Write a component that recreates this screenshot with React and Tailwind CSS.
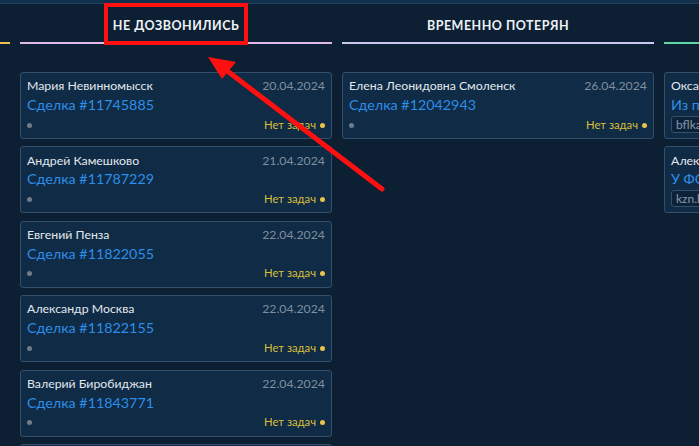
import React from "react";

const columns = [
  { id: "c1", title: "", line: "bg-[#e9c24d]", cards: [] },
  {
    id: "c2",
    title: "НЕ ДОЗВОНИЛИСЬ",
    line: "bg-[#e2b6ea]",
    cards: [
      { name: "Мария Невинномысск", date: "20.04.2024", deal: "Сделка #11745885" },
      { name: "Андрей Камешково", date: "21.04.2024", deal: "Сделка #11787229" },
      { name: "Евгений Пенза", date: "22.04.2024", deal: "Сделка #11822055" },
      { name: "Александр Москва", date: "22.04.2024", deal: "Сделка #11822155" },
      { name: "Валерий Биробиджан", date: "22.04.2024", deal: "Сделка #11843771" },
      { name: "", date: "", deal: "", empty: true },
    ],
  },
  {
    id: "c3",
    title: "ВРЕМЕННО ПОТЕРЯН",
    line: "bg-[#c9c8f0]",
    cards: [{ name: "Елена Леонидовна Смоленск", date: "26.04.2024", deal: "Сделка #12042943" }],
  },
  {
    id: "c4",
    title: "",
    line: "bg-[#5fd6a4]",
    cards: [
      { name: "Оксана", date: "", deal: "Из п", tag: "bflka" },
      { name: "Алекс", date: "", deal: "У ФС", tag: "kzn.b" },
    ],
  },
];

function Card({ c }) {
  if (c.empty) {
    return <div className="h-[67px] rounded-[3px] border border-[#344f6b] bg-[#0f2b45]" />;
  }
  return (
    <div className="h-[67px] rounded-[3px] border border-[#344f6b] bg-[#0f2b45] px-[6px] pt-[5px] flex flex-col">
      <div className="flex justify-between items-center h-[17px]">
        <span className="text-[12.3px] text-[#e3e8ee] whitespace-nowrap">{c.name}</span>
        <span className="text-[12.3px] text-[#7f8e9f]">{c.date}</span>
      </div>
      <div className="text-[14.3px] leading-[20px] text-[#2e8ee8] whitespace-nowrap">{c.deal}</div>
      {c.tag ? (
        <div className="mt-[1px] self-start rounded-[3px] border border-[#344f6b] bg-[#0c2238] px-[4px] text-[12px] leading-[15px] text-[#8a98a8]">
          {c.tag}
        </div>
      ) : (
        <div className="flex justify-between items-center mt-[1px] h-[18px]">
          <span className="w-[5px] h-[5px] rounded-full bg-[#6f7c8a]" />
          <span className="flex items-center gap-[4px] text-[11.3px] text-[#d9bf3c]">
            Нет задач
            <span className="w-[5px] h-[5px] rounded-full bg-[#e9c24d]" />
          </span>
        </div>
      )}
    </div>
  );
}

export default function App() {
  return (
    <div
      className="relative w-[699px] h-[446px] overflow-hidden bg-[#0c1f33]"
      style={{ fontFamily: 'Lato, "Noto Sans", sans-serif' }}
    >
      <div className="h-[4px] bg-[#12304b] border-b border-[#1f4260]" />
      <div className="flex gap-[10px] ml-[-302px]">
        {columns.map((col) => (
          <div key={col.id} className="w-[312px] shrink-0 flex flex-col">
            <div className="h-[38px] pt-[6px] flex items-center justify-center text-[12.5px] font-bold tracking-[0.04em] text-[#eef2f6]">
              {col.title}
            </div>
            <div className={`h-[2px] ${col.line}`} />
            <div className="flex flex-col gap-[7.4px] pt-[28px]">
              {col.cards.map((c, i) => (
                <Card key={i} c={c} />
              ))}
            </div>
          </div>
        ))}
      </div>

      {/* annotation overlay */}
      <div className="absolute left-[104px] top-[3px] w-[144px] h-[42px] border-[4px] border-[#ff1010]" />
      <svg className="absolute left-0 top-0" width="699" height="446">
        <line x1="382" y1="189" x2="222" y2="67" stroke="#ff1010" strokeWidth="5" strokeLinecap="round" />
        <polygon points="208,57 236,62 222,79" fill="#ff1010" />
      </svg>
    </div>
  );
}
